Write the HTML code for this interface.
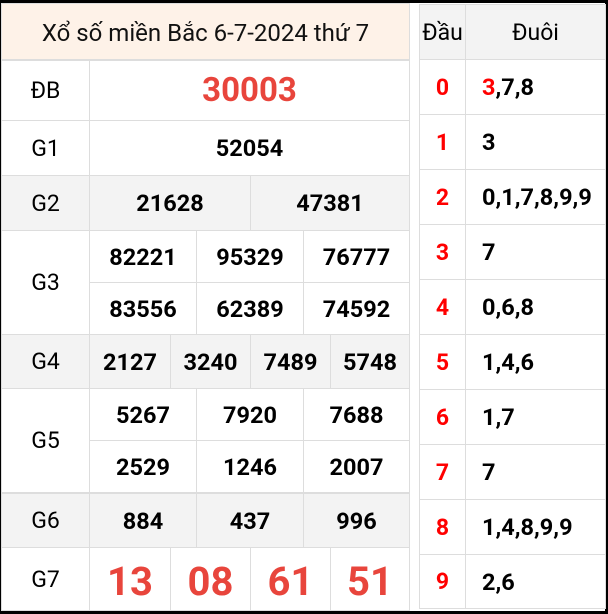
<!DOCTYPE html>
<html><head><meta charset="utf-8"><style>
*{margin:0;padding:0;box-sizing:border-box}
html,body{width:608px;height:614px;overflow:hidden;background:#000}
#f{position:absolute;left:2px;top:3px;width:603px;height:608px;background:#fff}
.c{position:absolute;display:flex;align-items:center;justify-content:center;border:1px solid #ddd;margin:-1px 0 0 -1px;font-family:"Roboto","Liberation Sans",sans-serif;color:#000;font-size:23.5px;font-weight:bold;background:#fff}
.l{font-weight:normal;font-size:23px}
.g{background:#f3f3f3}
.r{color:#e8453c}
.h{background:#fef2e8;font-weight:normal;font-size:24px;color:#111;padding-top:2px}
.d{color:#f00;font-size:23px}
.t{justify-content:flex-start;padding-left:16px;font-size:23.5px}
</style></head><body><div id="f"></div>
<div class="c h" style="left:2px;top:4px;width:409px;height:57px">Xổ số miền Bắc 6-7-2024 thứ 7</div>

<div class="c l" style="left:2px;top:61px;width:89px;height:61px">ĐB</div>
<div class="c r" style="left:90px;top:61px;width:321px;height:61px;font-size:33px">30003</div>

<div class="c l" style="left:2px;top:121px;width:89px;height:56px">G1</div>
<div class="c" style="left:90px;top:121px;width:321px;height:56px">52054</div>

<div class="c l g" style="left:2px;top:176px;width:89px;height:56px">G2</div>
<div class="c g" style="left:90px;top:176px;width:162px;height:56px">21628</div>
<div class="c g" style="left:251px;top:176px;width:160px;height:56px">47381</div>

<div class="c l" style="left:2px;top:231px;width:89px;height:105px">G3</div>
<div class="c" style="left:90px;top:231px;width:108px;height:53px">82221</div>
<div class="c" style="left:197px;top:231px;width:108px;height:53px">95329</div>
<div class="c" style="left:304px;top:231px;width:107px;height:53px">76777</div>
<div class="c" style="left:90px;top:283px;width:108px;height:53px">83556</div>
<div class="c" style="left:197px;top:283px;width:108px;height:53px">62389</div>
<div class="c" style="left:304px;top:283px;width:107px;height:53px">74592</div>

<div class="c l g" style="left:2px;top:335px;width:89px;height:55px">G4</div>
<div class="c g" style="left:90px;top:335px;width:82px;height:55px">2127</div>
<div class="c g" style="left:171px;top:335px;width:81px;height:55px">3240</div>
<div class="c g" style="left:251px;top:335px;width:81px;height:55px">7489</div>
<div class="c g" style="left:331px;top:335px;width:80px;height:55px">5748</div>

<div class="c l" style="left:2px;top:389px;width:89px;height:105px">G5</div>
<div class="c" style="left:90px;top:389px;width:108px;height:53px">5267</div>
<div class="c" style="left:197px;top:389px;width:108px;height:53px">7920</div>
<div class="c" style="left:304px;top:389px;width:107px;height:53px">7688</div>
<div class="c" style="left:90px;top:441px;width:108px;height:53px">2529</div>
<div class="c" style="left:197px;top:441px;width:108px;height:53px">1246</div>
<div class="c" style="left:304px;top:441px;width:107px;height:53px">2007</div>

<div class="c l g" style="left:2px;top:494px;width:89px;height:55px">G6</div>
<div class="c g" style="left:90px;top:494px;width:108px;height:55px">884</div>
<div class="c g" style="left:197px;top:494px;width:108px;height:55px">437</div>
<div class="c g" style="left:304px;top:494px;width:107px;height:55px">996</div>

<div class="c l" style="left:2px;top:548px;width:89px;height:64px">G7</div>
<div class="c r" style="left:90px;top:548px;width:82px;height:64px;font-size:40px;padding-top:5px">13</div>
<div class="c r" style="left:171px;top:548px;width:81px;height:64px;font-size:40px;padding-top:5px">08</div>
<div class="c r" style="left:251px;top:548px;width:81px;height:64px;font-size:40px;padding-top:5px">61</div>
<div class="c r" style="left:331px;top:548px;width:80px;height:64px;font-size:40px;padding-top:5px">51</div>

<div class="c l g" style="left:420px;top:5px;width:47px;height:56px;font-size:23px">Đầu</div>
<div class="c l g" style="left:466px;top:5px;width:141px;height:56px;font-size:23px">Đuôi</div>

<div class="c d" style="left:420px;top:60px;width:47px;height:56px">0</div>
<div class="c t" style="left:466px;top:60px;width:141px;height:56px"><span style="color:#f00">3</span>,7,8</div>
<div class="c d" style="left:420px;top:115px;width:47px;height:56px">1</div>
<div class="c t" style="left:466px;top:115px;width:141px;height:56px">3</div>
<div class="c d" style="left:420px;top:170px;width:47px;height:56px">2</div>
<div class="c t" style="left:466px;top:170px;width:141px;height:56px">0,1,7,8,9,9</div>
<div class="c d" style="left:420px;top:225px;width:47px;height:56px">3</div>
<div class="c t" style="left:466px;top:225px;width:141px;height:56px">7</div>
<div class="c d" style="left:420px;top:280px;width:47px;height:56px">4</div>
<div class="c t" style="left:466px;top:280px;width:141px;height:56px">0,6,8</div>
<div class="c d" style="left:420px;top:335px;width:47px;height:56px">5</div>
<div class="c t" style="left:466px;top:335px;width:141px;height:56px">1,4,6</div>
<div class="c d" style="left:420px;top:390px;width:47px;height:56px">6</div>
<div class="c t" style="left:466px;top:390px;width:141px;height:56px">1,7</div>
<div class="c d" style="left:420px;top:445px;width:47px;height:56px">7</div>
<div class="c t" style="left:466px;top:445px;width:141px;height:56px">7</div>
<div class="c d" style="left:420px;top:500px;width:47px;height:56px">8</div>
<div class="c t" style="left:466px;top:500px;width:141px;height:56px">1,4,8,9,9</div>
<div class="c d" style="left:420px;top:555px;width:47px;height:55px">9</div>
<div class="c t" style="left:466px;top:555px;width:141px;height:55px">2,6</div>
</body></html>
